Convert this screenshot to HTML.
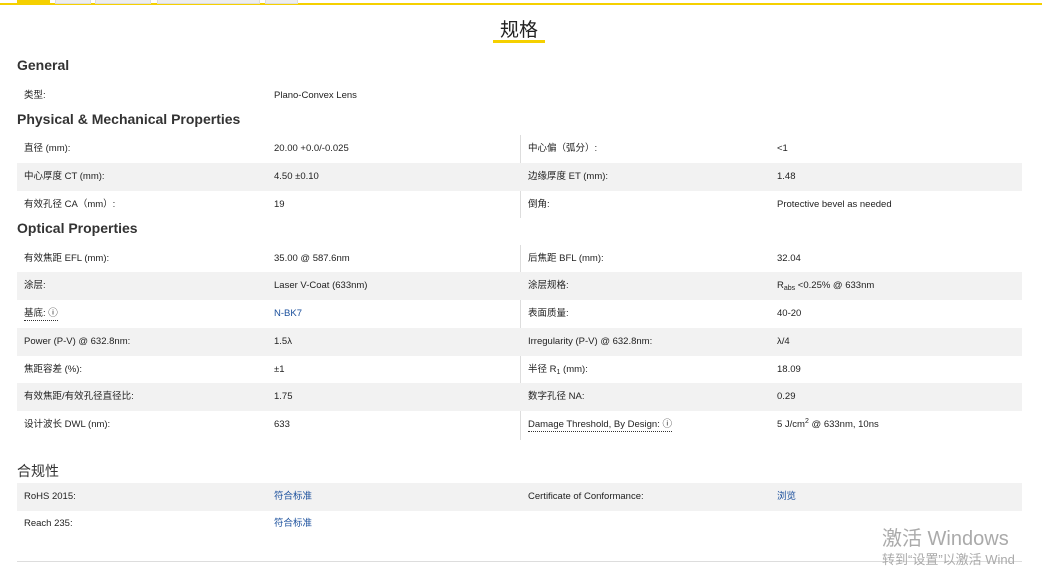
<!DOCTYPE html>
<html><head><meta charset="utf-8"><style>
*{margin:0;padding:0;box-sizing:border-box}
body{width:1042px;height:565px;overflow:hidden;background:#fff;font-family:"Liberation Sans","Noto Sans CJK SC",sans-serif;color:#222;position:relative}
.a{position:absolute}
.tab{position:absolute;top:0;height:4px;background:#eee;border:1px solid #ddd;border-top:none}
.h{position:absolute;left:17px;font-size:14px;font-weight:bold;color:#333}
.row{position:absolute;left:17px;width:1005px;height:28px;font-size:9.5px;color:#222}
.g{background:#f2f2f2}
.row span{position:absolute;top:0;line-height:28px;height:28px;white-space:nowrap}
.row sub,.row sup{font-size:7px;line-height:0;vertical-align:0;position:relative}
.row sub{top:2px}.row sup{top:-4px}
.l1{left:7px}.v1{left:257px}.l2{left:511px}.v2{left:760px}
.lk{color:#1a4f9c}
.dot{border-bottom:1px dotted #333;line-height:12px!important;height:auto!important;top:8px!important}
.div{position:absolute;left:520px;width:1px;background:#ddd}
</style></head><body>
<div class="a" style="left:0;top:3px;width:1042px;height:2px;background:#f5d000"></div>
<div class="tab" style="left:17px;width:33px;background:#f5d000;border-color:#f5d000"></div>
<div class="tab" style="left:55px;width:36px"></div>
<div class="tab" style="left:95px;width:56px"></div>
<div class="tab" style="left:157px;width:103px"></div>
<div class="tab" style="left:265px;width:33px"></div>
<div class="a" style="left:500px;top:15px;font-size:19px;color:#222">规格</div>
<div class="a" style="left:493px;top:40px;width:52px;height:3px;background:#f5d000"></div>

<div class="h" style="top:57px">General</div>
<div class="row" style="top:82px"><span class="l1">类型:</span><span class="v1">Plano-Convex Lens</span></div>

<div class="h" style="top:111px">Physical &amp; Mechanical Properties</div>
<div class="div" style="top:135px;height:83px"></div>
<div class="row" style="top:135px"><span class="l1">直径 (mm):</span><span class="v1">20.00 +0.0/-0.025</span><span class="l2">中心偏（弧分）:</span><span class="v2">&lt;1</span></div>
<div class="row g" style="top:163px"><span class="l1">中心厚度 CT (mm):</span><span class="v1">4.50 ±0.10</span><span class="l2">边缘厚度 ET (mm):</span><span class="v2">1.48</span></div>
<div class="row" style="top:191px"><span class="l1">有效孔径 CA（mm）:</span><span class="v1">19</span><span class="l2">倒角:</span><span class="v2">Protective bevel as needed</span></div>

<div class="h" style="top:220px">Optical Properties</div>
<div class="div" style="top:245px;height:195px"></div>
<div class="row" style="top:245px"><span class="l1">有效焦距 EFL (mm):</span><span class="v1">35.00 @ 587.6nm</span><span class="l2">后焦距 BFL (mm):</span><span class="v2">32.04</span></div>
<div class="row g" style="top:272px"><span class="l1">涂层:</span><span class="v1">Laser V-Coat (633nm)</span><span class="l2">涂层规格:</span><span class="v2">R<sub>abs</sub> &lt;0.25% @ 633nm</span></div>
<div class="row" style="top:300px"><span class="l1 dot">基底: ⓘ</span><span class="v1 lk">N-BK7</span><span class="l2">表面质量:</span><span class="v2">40-20</span></div>
<div class="row g" style="top:328px"><span class="l1">Power (P-V) @ 632.8nm:</span><span class="v1">1.5λ</span><span class="l2">Irregularity (P-V) @ 632.8nm:</span><span class="v2">λ/4</span></div>
<div class="row" style="top:356px"><span class="l1">焦距容差 (%):</span><span class="v1">±1</span><span class="l2">半径 R<sub>1</sub> (mm):</span><span class="v2">18.09</span></div>
<div class="row g" style="top:383px"><span class="l1">有效焦距/有效孔径直径比:</span><span class="v1">1.75</span><span class="l2">数字孔径 NA:</span><span class="v2">0.29</span></div>
<div class="row" style="top:411px"><span class="l1">设计波长 DWL (nm):</span><span class="v1">633</span><span class="l2 dot">Damage Threshold, By Design: ⓘ</span><span class="v2">5 J/cm<sup>2</sup> @ 633nm, 10ns</span></div>

<div class="h" style="top:461px;font-weight:normal;font-size:14px">合规性</div>
<div class="div" style="top:483px;height:27px"></div>
<div class="row g" style="top:483px"><span class="l1">RoHS 2015:</span><span class="v1 lk">符合标准</span><span class="l2">Certificate of Conformance:</span><span class="v2 lk">浏览</span></div>
<div class="row" style="top:510px"><span class="l1">Reach 235:</span><span class="v1 lk">符合标准</span></div>
<div class="a" style="left:17px;top:561px;width:1005px;height:1px;background:#ddd"></div>
<div class="a" style="left:882px;top:522px;font-size:20px;color:#aaa">激活 Windows</div>
<div class="a" style="left:882px;top:549px;font-size:13px;color:#aaa;white-space:nowrap">转到“设置”以激活 Wind</div>
</body></html>
